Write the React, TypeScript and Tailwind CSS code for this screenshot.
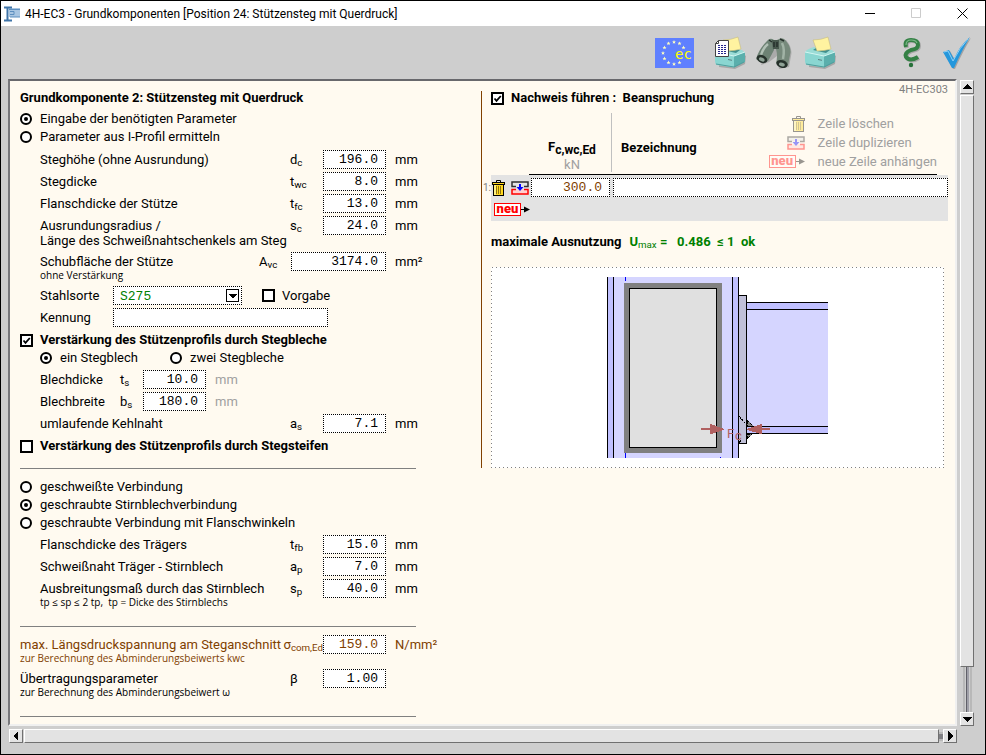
import { useState } from "react";
import type { ReactNode } from "react";

const bevel = "border border-t-white border-l-white border-r-[#707070] border-b-[#707070] bg-[#e3e3e3]";
const field = "block h-[19px] min-w-0 border border-dotted border-black bg-white font-['Liberation_Mono',monospace] text-[13px] outline-none";
const small = "block font-['Open_Sans',sans-serif] text-[10px] leading-3";

type RowProps = {
  id: string;
  label: ReactNode;
  note?: ReactNode;
  symbol: ReactNode;
  value: string;
  unit?: string;
  tone?: string;
  flush?: boolean;
};

/* label | symbol | value | unit */
function Row({ id, label, note, symbol, value, unit, tone = "text-black", flush }: RowProps) {
  return (
    <div className={`flex items-start whitespace-nowrap ${tone} ${flush ? "" : "pl-5"}`}>
      <label htmlFor={id} className={`pt-[2px] leading-[15px] ${flush ? "w-[260px]" : "w-[250px]"}`}>
        {label}
        {note && <span className={small}>{note}</span>}
      </label>
      <span className={`pt-[2px] leading-[15px] ${flush ? "w-[43px] text-right" : "w-[33px]"}`}>{symbol}</span>
      <input id={id} defaultValue={value} className={`${field} w-[63px] pr-[7px] text-right`} />
      {unit && <span className="pt-[2px] pl-[9px] leading-[15px]">{unit}</span>}
    </div>
  );
}

function Radio({ name, label, checked, onChange }: { name: string; label: string; checked: boolean; onChange: () => void }) {
  return (
    <label className="flex h-[18px] items-center gap-2 whitespace-nowrap">
      <input
        type="radio"
        name={name}
        checked={checked}
        onChange={onChange}
        className="grid size-3 shrink-0 appearance-none place-items-center rounded-full border-2 border-black bg-white before:size-1 before:rounded-full checked:before:bg-black"
      />
      {label}
    </label>
  );
}

function Check({ label, checked, bold }: { label: ReactNode; checked?: boolean; bold?: boolean }) {
  return (
    <label className={`flex h-[18px] items-center gap-[7px] whitespace-nowrap ${bold ? "font-bold" : ""}`}>
      <span className="grid shrink-0">
        <input
          type="checkbox"
          defaultChecked={checked}
          className="peer col-start-1 row-start-1 size-[13px] appearance-none border-2 border-black bg-white"
        />
        <svg viewBox="0 0 13 13" className="pointer-events-none col-start-1 row-start-1 hidden size-[13px] peer-checked:block">
          <path d="M3.5 6.5 L5.5 8.8 L9.8 4" fill="none" stroke="#000" strokeWidth="1.8" />
        </svg>
      </span>
      {label}
    </label>
  );
}

function Trash() {
  return (
    <svg width="13" height="16" viewBox="0 0 13 16">
      <path d="M1 4h11v12H1z" fill="#000" />
      <path d="M2 5h9v10H2z" fill="#ffd820" />
      <path d="M2 5h2v10H2z" fill="#fff080" />
      <path d="M4.500 6v8M6.500 6v8M8.500 6v8" stroke="#403000" strokeWidth=".6" />
      <path d="M0 2h13v3H0z" fill="#000" />
      <path d="M1 3h11v1H1z" fill="#ffd820" />
      <path d="M4.500 2V.5h4V2" fill="none" stroke="#000" />
    </svg>
  );
}

function Duplicate() {
  return (
    <svg width="18" height="14" viewBox="0 0 18 14">
      <path d="M5 5.500H1V1h16v4.500h-4" fill="#e3e3e3" stroke="#303030" strokeWidth="1.500" />
      <path d="M5 8.500H1V13h16V8.500h-4" fill="#ffd0d0" stroke="#f00" strokeWidth="1.500" />
      <path d="M9 3v5" stroke="#00f" strokeWidth="2" />
      <path d="M5.500 6h7L9 10z" fill="#00f" />
    </svg>
  );
}

function Neu() {
  return (
    <span className="flex items-center">
      <span className="h-[13px] w-[27px] border border-[#f00] bg-white text-center text-[13px] leading-[9px] font-black text-[#f00]">neu</span>
      <svg width="9" height="7" viewBox="0 0 9 7">
        <path d="M0 3.500h5" stroke="#000" />
        <path d="M3 0.500l6 3-6 3z" fill="#000" />
      </svg>
    </span>
  );
}

function Printer({ page }: { page?: boolean }) {
  return (
    <svg width="32" height="34" viewBox="0 0 32 34">
      <path d="M5 20 L29 18 L32 20 L31 28 L21 33 L5 31z" fill="#777" opacity=".45" />
      <path d="M1 16 Q3 13 10 11 L28 14 Q31 16 31 18 L20 21z" fill="#9bdcd6" />
      <path d="M9 14 L12 12 L26 14 L22 17z" fill="#3f8f8d" />
      <path d="M9 4 Q17 4 24 1 L27 13 Q20 15 13 15z" fill="#fff3a0" stroke="#c4bb80" strokeWidth=".6" />
      <path d="M1 16 L20 20 V31.500 L3 29 Q1 28 1 25z" fill="#8ad6d1" />
      <path d="M20 20 L31 16 V26 L20 31.500z" fill="#5aafac" />
      <path d="M1 16 L20 20 L31 16" fill="none" stroke="#d2f6f2" />
      <path d="M2 28 L20 31 L30 26" fill="none" stroke="#4f9e9c" />
      <path d="M14 23.500l4 .8" stroke="#5a8080" />
      {page && (
        <g>
          <path d="M4.500 4.500 H14.500 V20.500 H1.500 V7.500z" fill="#fff" stroke="#444" />
          <path d="M1.500 7.500h3v-3" fill="none" stroke="#444" />
          <path d="M4 9.500h8M4 11.500h8M4 13.500h8M4 15.500h8M4 17.500h8" stroke="#24248c" strokeDasharray="2 1" />
        </g>
      )}
    </svg>
  );
}

function Binoculars() {
  return (
    <svg width="38" height="34" viewBox="0 0 38 34">
      <path d="M14 5 L31 4 Q38 12 36 20 L34 31 L24 33 L22 20 L14 26 L6 29z" fill="#666" opacity=".35" />
      <path d="M12 5 Q15 1 19 4 L19 14 Q16 20 13 25 Q7 29 1 23 Q4 13 12 5z" fill="#6d8274" />
      <path d="M22 4 Q28 0 31 5 Q37 12 35 19 L33 29 Q27 32 21 27 Q23 20 21 13z" fill="#76897b" />
      <path d="M17 4h7v9h-6z" fill="#46574c" />
      <path d="M13 8 Q8 12 6 19" fill="none" stroke="#c2d0c5" strokeWidth="2.500" opacity=".8" />
      <path d="M27 7 Q30 13 28 23" fill="none" stroke="#b4c4b8" strokeWidth="2.500" opacity=".7" />
      <path d="M14 4l3 2M25 3l4 2M19 6v5M22 6v5" stroke="#26312b" strokeWidth="1.500" />
      <ellipse cx="7" cy="23" rx="5.500" ry="3.800" transform="rotate(25 7 23)" fill="#25302a" />
      <ellipse cx="27" cy="28" rx="5.800" ry="3.800" transform="rotate(15 27 28)" fill="#25302a" />
      <ellipse cx="7" cy="23.500" rx="3" ry="1.800" transform="rotate(25 7 23)" fill="#8fa296" />
      <ellipse cx="27" cy="28.500" rx="3" ry="1.800" transform="rotate(15 27 28)" fill="#8fa296" />
    </svg>
  );
}

const starPoints = Array.from({ length: 12 }, (_, i) => {
  const a = (i * Math.PI) / 6;
  return { x: 19 + 11 * Math.sin(a), y: 15 - 11 * Math.cos(a), i };
}).filter((p) => p.i !== 3 && p.i !== 4);

function EcBadge() {
  return (
    <svg width="39" height="30" viewBox="0 0 39 30">
      <rect width="39" height="30" fill="#5f80ff" />
      {starPoints.map((p) => (
        <path
          key={p.i}
          transform={`translate(${p.x} ${p.y})`}
          d="M0-2 L.6-.6 2-.6 .9.300 1.300 1.800 0 .9-1.300 1.800-.9.300-2-.6-.6-.6z"
          fill="#ffffc0"
        />
      ))}
      <text x="20" y="21" fontFamily="DejaVu Sans Mono" fontSize="14" fill="#ff0">ec</text>
    </svg>
  );
}

function JointDrawing() {
  return (
    <svg viewBox="491 267 453 201" className="mt-4 block w-full max-w-[453px]" shapeRendering="crispEdges">
      <rect x="491" y="267" width="453" height="201" fill="#fff" />
      <rect x="491.500" y="267.500" width="452" height="200" fill="none" stroke="#808080" strokeDasharray="1 3" />
      {/* column */}
      <rect x="607" y="277" width="132" height="181" fill="#c0c0ff" />
      <rect x="614" y="277" width="118" height="181" fill="#d5d5ff" />
      <path d="M607.500 277v181M613.500 277v181M732.500 277v181M738.500 277v181" stroke="#000" />
      <path d="M625.500 277v4M625.500 453v5M720.500 457v1" stroke="#00f" />
      <rect x="624" y="283" width="98" height="170" fill="#808080" />
      <rect x="629.500" y="288.500" width="87" height="159" fill="#e0e0e0" stroke="#000" />
      {/* beam */}
      <rect x="747" y="302" width="81" height="132" fill="#c0c0ff" />
      <rect x="747" y="310" width="81" height="116" fill="#d5d5ff" />
      <path d="M747 302.500h81M747 309.500h81M747 426.500h81M747 433.500h81" stroke="#000" />
      {/* end plate and welds */}
      <rect x="738.500" y="295.500" width="8" height="148" fill="#c0c0d8" stroke="#000" />
      <path d="M747 420l6 6h-6zM747 434h5l-5 5z" fill="#808080" stroke="#000" strokeDasharray="3 1" />
      <path d="M739 416l6 7M739 443l2-3" stroke="#000" strokeDasharray="3 1" />
      <path d="M701 428h9v-4h1l13 5v1l-13 4h-1v-4h-9zM770 428h-8v-4h-1l-14 5v1l14 4h1v-4h8z" fill="#b06060" />
      <text x="727" y="438" fontFamily="Roboto" fontSize="13" fill="#b06060">F</text>
      <text x="735" y="440" fontFamily="Roboto" fontSize="13" fill="#b06060">c</text>
    </svg>
  );
}

function Arrow({ d }: { d: string }) {
  return (
    <svg width="12" height="12" viewBox="0 0 12 12" shapeRendering="crispEdges">
      <path d={d} fill="#000" />
    </svg>
  );
}

const Rule = ({ className }: { className: string }) => <hr className={`w-[396px] border-[#808080] ${className}`} />;

export default function App() {
  const [source, setSource] = useState("eingabe");
  const [plates, setPlates] = useState("ein");
  const [joint, setJoint] = useState("stirnblech");

  return (
    <div className="flex min-h-screen flex-col border border-black bg-[#cecece] font-[Roboto,sans-serif] text-[13px] text-black">
      <header className="flex h-[25px] items-center bg-white pl-[3px]">
        <svg width="17" height="16" viewBox="0 0 17 16">
          <path d="M5 2h11v9H5z" fill="#a9c6e2" />
          <path d="M0 1.500h8M0 14.500h8M3.500 1v13" stroke="#3f74a8" strokeWidth="2" />
          <path d="M5 3.500h11M6 11h10M6 5.500h4v3H6" fill="none" stroke="#5d8fbf" />
        </svg>
        <h1 className="ml-1 text-[12px] whitespace-nowrap">
          4H-EC3 - Grundkomponenten [Position 24: Stützensteg mit Querdruck]
        </h1>
        <div className="ml-auto flex">
          <button type="button" aria-label="Minimieren" className="grid h-6 w-[46px] place-items-center">
            <svg width="11" height="11"><path d="M0 5.500h10" stroke="#000" /></svg>
          </button>
          <button type="button" aria-label="Maximieren" className="grid h-6 w-[46px] place-items-center">
            <svg width="11" height="11"><path d="M.5.500h9v9h-9z" fill="none" stroke="#ccc" /></svg>
          </button>
          <button type="button" aria-label="Schließen" className="grid h-6 w-[46px] place-items-center">
            <svg width="11" height="11"><path d="M.5.500l10 10M10.500.500l-10 10" stroke="#000" /></svg>
          </button>
        </div>
      </header>

      <div className="flex h-[53px] items-center justify-end pr-[13px]">
        <button type="button" aria-label="Eurocode" className="mr-5"><EcBadge /></button>
        <button type="button" aria-label="Druckliste" className="mr-[9px]"><Printer page /></button>
        <button type="button" aria-label="Ansehen" className="mr-[11px]"><Binoculars /></button>
        <button type="button" aria-label="Drucken" className="mr-[66px]"><Printer /></button>
        <button type="button" aria-label="Hilfe" className="mr-5">
          <svg width="20" height="32" viewBox="0 0 20 32">
            <path d="M4 10 Q2 3 9 3 Q16 3 16 8 Q16 12 9 13 Q2 16 4 20 Q8 25 16 20" fill="none" stroke="#777" strokeWidth="4" opacity=".45" transform="translate(1 1)" />
            <path d="M4 10 Q2 3 9 3 Q16 3 16 8 Q16 12 9 13 Q2 16 4 20 Q8 25 16 20" fill="none" stroke="#338044" strokeWidth="4" />
            <path d="M4 8 Q4 3 9 3 Q14 3 15 6" fill="none" stroke="#7bb888" strokeWidth="1.200" />
            <circle cx="9" cy="28" r="2.200" fill="#27713a" />
          </svg>
        </button>
        <button type="button" aria-label="Übernehmen">
          <svg width="30" height="34" viewBox="0 0 30 34">
            <path d="M1 16 L7 14 L12 23 Q18 9 28 1 Q20 14 12 32 H10z" fill="#777" opacity=".5" transform="translate(1 1)" />
            <path d="M1 16 L7 14 L12 23 Q18 9 28 1 Q20 14 12 32 H10z" fill="#2497dc" />
            <path d="M2 16 L6 15 L11 25 Q18 11 26 3" fill="none" stroke="#8fd0f5" />
          </svg>
        </button>
      </div>

      <div className="grid flex-1 grid-cols-[minmax(0,1fr)_14px] grid-rows-[1fr_14px] gap-[3px] pr-[11px] pb-[11px] pl-[7px]">
        <main className="flex border-2 border-t-[#68686c] border-r-[#f0f0f0] border-b-[#f0f0f0] border-l-[#78787c] bg-[#fffaf0] pt-[5px] pb-[6px]">
          <form className="w-[471px] shrink-0 pl-[10px]">
            <h2 className="leading-6 font-bold">Grundkomponente 2: Stützensteg mit Querdruck</h2>
            <Radio name="source" label="Eingabe der benötigten Parameter" checked={source === "eingabe"} onChange={() => setSource("eingabe")} />
            <Radio name="source" label="Parameter aus I-Profil ermitteln" checked={source === "profil"} onChange={() => setSource("profil")} />

            <div className="mt-1 flex flex-col gap-[3px]">
              <Row id="dc" label="Steghöhe (ohne Ausrundung)" symbol={<>d<sub>c</sub></>} value="196.0" unit="mm" />
              <Row id="twc" label="Stegdicke" symbol={<>t<sub>wc</sub></>} value="8.0" unit="mm" />
              <Row id="tfc" label="Flanschdicke der Stütze" symbol={<>t<sub>fc</sub></>} value="13.0" unit="mm" />
              <Row
                id="sc"
                label={<>Ausrundungsradius /<br />Länge des Schweißnahtschenkels am Steg</>}
                symbol={<>s<sub>c</sub></>}
                value="24.0"
                unit="mm"
              />
            </div>
            <div className="mt-1 flex items-start pl-5">
              <label htmlFor="avc" className="w-[219px] pt-[2px] leading-[15px]">
                Schubfläche der Stütze
                <span className={small}>ohne Verstärkung</span>
              </label>
              <span className="w-8 pt-[2px] leading-[15px]">A<sub>vc</sub></span>
              <input id="avc" defaultValue="3174.0" className={`${field} w-[95px] pr-[7px] text-right`} />
              <span className="pt-[2px] pl-[9px] leading-[15px]">mm²</span>
            </div>

            <div className="mt-[5px] flex h-[19px] items-center pl-5">
              <label htmlFor="stahl" className="w-[73px]">Stahlsorte</label>
              <div className="relative mr-5 w-[129px]">
                <select id="stahl" className={`${field} w-full appearance-none pl-[6px] text-[#008000]`}>
                  <option>S275</option>
                  <option>S235</option>
                  <option>S355</option>
                </select>
                <svg width="13" height="13" viewBox="0 0 13 13" className="pointer-events-none absolute top-[3px] right-[3px]" shapeRendering="crispEdges">
                  <path d="M.5.500h12v12H.5z" fill="#fff" stroke="#000" />
                  <path d="M2 5h9L6.500 9.500z" fill="#000" />
                </svg>
              </div>
              <Check label="Vorgabe" />
            </div>
            <div className="mt-[3px] flex h-[19px] items-center pl-5">
              <label htmlFor="kennung" className="w-[73px]">Kennung</label>
              <input id="kennung" className={`${field} w-[215px]`} />
            </div>

            <div className="mt-1">
              <Check bold checked label="Verstärkung des Stützenprofils durch Stegbleche" />
            </div>
            <div className="flex pl-5">
              <div className="w-[130px]">
                <Radio name="plates" label="ein Stegblech" checked={plates === "ein"} onChange={() => setPlates("ein")} />
              </div>
              <Radio name="plates" label="zwei Stegbleche" checked={plates === "zwei"} onChange={() => setPlates("zwei")} />
            </div>
            <div className="mt-[3px] flex flex-col gap-[3px]">
              <div className="flex pl-5 leading-[19px]">
                <label htmlFor="ts" className="w-20">Blechdicke</label>
                <span className="h-[19px] w-[23px]">t<sub>s</sub></span>
                <input id="ts" defaultValue="10.0" className={`${field} w-[63px] pr-[7px] text-right`} />
                <span className="pl-[9px] text-[#a0a0a0]">mm</span>
              </div>
              <div className="flex pl-5 leading-[19px]">
                <label htmlFor="bs" className="w-20">Blechbreite</label>
                <span className="h-[19px] w-[23px]">b<sub>s</sub></span>
                <input id="bs" defaultValue="180.0" className={`${field} w-[63px] pr-[7px] text-right`} />
                <span className="pl-[9px] text-[#a0a0a0]">mm</span>
              </div>
              <Row id="as" label="umlaufende Kehlnaht" symbol={<>a<sub>s</sub></>} value="7.1" unit="mm" />
            </div>
            <div className="mt-1">
              <Check bold label="Verstärkung des Stützenprofils durch Stegsteifen" />
            </div>

            <Rule className="mt-[13px] mb-[9px]" />

            <Radio name="joint" label="geschweißte Verbindung" checked={joint === "schweiss"} onChange={() => setJoint("schweiss")} />
            <Radio name="joint" label="geschraubte Stirnblechverbindung" checked={joint === "stirnblech"} onChange={() => setJoint("stirnblech")} />
            <Radio name="joint" label="geschraubte Verbindung mit Flanschwinkeln" checked={joint === "winkel"} onChange={() => setJoint("winkel")} />
            <div className="mt-[3px] flex flex-col gap-[3px]">
              <Row id="tfb" label="Flanschdicke des Trägers" symbol={<>t<sub>fb</sub></>} value="15.0" unit="mm" />
              <Row id="ap" label="Schweißnaht Träger - Stirnblech" symbol={<>a<sub>p</sub></>} value="7.0" unit="mm" />
              <Row
                id="sp"
                label="Ausbreitungsmaß durch das Stirnblech"
                note={<>tp ≤ sp ≤ 2 tp,&nbsp; tp = Dicke des Stirnblechs</>}
                symbol={<>s<sub>p</sub></>}
                value="40.0"
                unit="mm"
              />
            </div>

            <Rule className="mt-[18px] mb-2" />

            <Row
              id="sigma"
              flush
              tone="text-[#804000]"
              label="max. Längsdruckspannung am Steganschnitt"
              note="zur Berechnung des Abminderungsbeiwerts kwc"
              symbol={<>σ<sub>com,Ed</sub></>}
              value="159.0"
              unit="N/mm²"
            />
            <div className="mt-[5px]">
              <Row
                id="beta"
                flush
                label="Übertragungsparameter"
                note="zur Berechnung des Abminderungsbeiwert ω"
                symbol={<span className="block pl-[10px] text-left">β</span>}
                value="1.00"
              />
            </div>

            <Rule className="mt-[18px]" />
          </form>

          <section className="flex min-w-0 flex-1 items-start">
            <div className="mt-[5px] w-px shrink-0 bg-[#804000] pt-[377px]" />
            <div className="min-w-0 flex-1 pr-[7px] pl-[9px]">
              <div className="flex h-6 justify-between">
                <div className="pt-[3px]">
                  <Check bold checked label={<>Nachweis führen :&nbsp; Beanspruchung</>} />
                </div>
                <span className="text-[11px] leading-[7px] text-[#808080]">4H-EC303</span>
              </div>

              <table className="-ml-[9px] w-[calc(100%+9px)] table-fixed border-collapse">
                <colgroup>
                  <col className="w-[9px]" />
                  <col className="w-[38px]" />
                  <col className="w-[82px]" />
                  <col />
                </colgroup>
                <thead>
                  <tr className="align-bottom">
                    <td colSpan={2} />
                    <th className="p-0 text-center font-bold">
                      <div className="flex h-[65px] flex-col items-center justify-end border-b border-black pl-1 leading-[18px]">
                        <span>F<sub className="text-[12px]">c,wc,Ed</sub></span>
                        <span className="font-normal text-[#a0a0a0]">kN</span>
                      </div>
                    </th>
                    <th className="p-0 text-left">
                      <div className="mr-[11px] h-[65px] border-b border-black pt-[3px]">
                        <div className="flex h-[59px] items-start justify-between border-l border-[#c0c0c0] pl-[9px]">
                          <span className="pt-[27px] leading-4 font-bold">Bezeichnung</span>
                          <ul className="grid grid-cols-[36px_auto] items-center gap-x-[13px] pt-px leading-[19px] font-normal text-[#a0a0a0]">
                            <li className="contents">
                              <span className="justify-self-end opacity-40"><Trash /></span>Zeile löschen
                            </li>
                            <li className="contents">
                              <span className="justify-self-end opacity-40"><Duplicate /></span>Zeile duplizieren
                            </li>
                            <li className="contents">
                              <span className="justify-self-end opacity-40"><Neu /></span>neue Zeile anhängen
                            </li>
                          </ul>
                        </div>
                      </div>
                    </th>
                  </tr>
                </thead>
                <tbody>
                  <tr className="h-[25px]">
                    <td className="p-0 text-right text-[10px] text-[#808080]">1:</td>
                    <td className="bg-[#e3e3e3] p-0">
                      <div className="flex items-center gap-[6px] pl-px">
                        <button type="button" aria-label="Zeile löschen"><Trash /></button>
                        <button type="button" aria-label="Zeile duplizieren"><Duplicate /></button>
                      </div>
                    </td>
                    <td className="bg-[#e3e3e3] p-0 pl-[2px]">
                      <input aria-label="Fc,wc,Ed" defaultValue="300.0" className={`${field} w-[79px] pr-[7px] text-right text-[#804000]`} />
                    </td>
                    <td className="bg-[#e3e3e3] p-0 pl-[2px]">
                      <input aria-label="Bezeichnung" className={`${field} w-full`} />
                    </td>
                  </tr>
                  <tr className="h-[21px]">
                    <td />
                    <td colSpan={3} className="bg-[#e3e3e3] p-0 pl-[3px] align-top">
                      <button type="button" aria-label="neue Zeile anhängen" className="mt-[3px] block"><Neu /></button>
                    </td>
                  </tr>
                </tbody>
              </table>

              <p className="mt-3 flex gap-2 leading-[18px] font-bold whitespace-nowrap">
                <span>maximale Ausnutzung</span>
                <span className="h-[18px] text-[#008000]">
                  U<sub className="font-normal">max</sub> =&nbsp;&nbsp; 0.486 &nbsp;≤ 1 &nbsp;ok
                </span>
              </p>
              <JointDrawing />
            </div>
          </section>
        </main>

        <div className="flex flex-col pt-px">
          <button type="button" aria-label="nach oben" className={`size-[14px] ${bevel}`}><Arrow d="M1 8l5-5 5 5z" /></button>
          <div className={`mt-px flex-1 ${bevel}`} />
          <div className="mx-auto h-[45px] w-[9px] border-x-2 border-[#b8b8b8] px-px">
            <div className="h-full border-l border-[#606068] bg-[#a0a0a8]" />
          </div>
          <button type="button" aria-label="nach unten" className={`size-[14px] ${bevel}`}><Arrow d="M1 4h10l-5 5z" /></button>
        </div>
        <div className="flex pl-px">
          <button type="button" aria-label="nach links" className={`size-[14px] ${bevel}`}><Arrow d="M8 1v10l-5-5z" /></button>
          <div className={`ml-px flex-1 ${bevel}`} />
          <div className="my-auto h-[9px] w-1 border-y-2 border-[#b8b8b8] bg-[#808084]" />
          <button type="button" aria-label="nach rechts" className={`size-[14px] ${bevel}`}><Arrow d="M4 1l5 5-5 5z" /></button>
        </div>
      </div>
    </div>
  );
}
